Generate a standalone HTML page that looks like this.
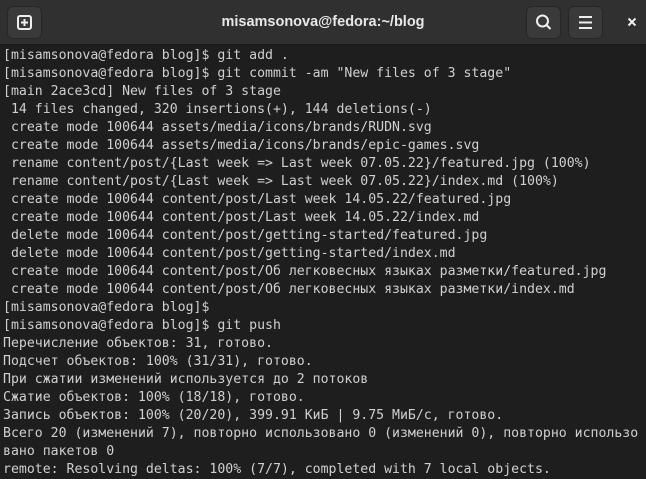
<!DOCTYPE html>
<html><head><meta charset="utf-8"><style>
html,body{margin:0;padding:0;width:646px;height:478px;overflow:hidden;background:#1e1e1e}
.hdr{position:absolute;left:0;top:0;width:646px;height:44px;background:#303030;border-bottom:1px solid #1a1a1a}
.title{position:absolute;left:0;width:646px;top:14px;text-align:center;color:#e8e8e8;font:bold 14.5px "Liberation Sans",sans-serif}
.btn{position:absolute;top:6px;width:33px;height:31px;background:#3a3a3a;border-radius:6px;border:1px solid #262626}
.term{position:absolute;left:3px;top:47px;color:#d0d0d0;font:13.2px "DejaVu Sans Mono","Liberation Mono",monospace;line-height:18px;white-space:pre}
</style></head><body>
<div class="hdr">
<div class="btn" style="left:7px"><svg width="33" height="31"><rect x="10" y="9" width="13" height="13" rx="2" fill="none" stroke="#eee" stroke-width="2"/><path d="M16.5 12v7M13 15.5h7" stroke="#eee" stroke-width="2"/></svg></div>
<div class="title">misamsonova@fedora:~/blog</div>
<div class="btn" style="left:526px"><svg width="33" height="31"><circle cx="15.5" cy="14" r="5.5" fill="none" stroke="#eee" stroke-width="2"/><path d="M19.5 18l4 4" stroke="#eee" stroke-width="2"/></svg></div>
<div class="btn" style="left:568px"><svg width="33" height="31"><path d="M10 10h13M10 15.5h13M10 21h13" stroke="#eee" stroke-width="2"/></svg></div>
<svg style="position:absolute;left:627px;top:17px" width="10" height="10"><path d="M1.5 1.5l7 7M8.5 1.5l-7 7" stroke="#eee" stroke-width="2"/></svg>
</div>
<div class="term">[misamsonova@fedora blog]$ git add .
[misamsonova@fedora blog]$ git commit -am "New files of 3 stage"
[main 2ace3cd] New files of 3 stage
 14 files changed, 320 insertions(+), 144 deletions(-)
 create mode 100644 assets/media/icons/brands/RUDN.svg
 create mode 100644 assets/media/icons/brands/epic-games.svg
 rename content/post/{Last week =&gt; Last week 07.05.22}/featured.jpg (100%)
 rename content/post/{Last week =&gt; Last week 07.05.22}/index.md (100%)
 create mode 100644 content/post/Last week 14.05.22/featured.jpg
 create mode 100644 content/post/Last week 14.05.22/index.md
 delete mode 100644 content/post/getting-started/featured.jpg
 delete mode 100644 content/post/getting-started/index.md
 create mode 100644 content/post/Об легковесных языках разметки/featured.jpg
 create mode 100644 content/post/Об легковесных языках разметки/index.md
[misamsonova@fedora blog]$
[misamsonova@fedora blog]$ git push
Перечисление объектов: 31, готово.
Подсчет объектов: 100% (31/31), готово.
При сжатии изменений используется до 2 потоков
Сжатие объектов: 100% (18/18), готово.
Запись объектов: 100% (20/20), 399.91 КиБ | 9.75 МиБ/с, готово.
Всего 20 (изменений 7), повторно использовано 0 (изменений 0), повторно использо
вано пакетов 0
remote: Resolving deltas: 100% (7/7), completed with 7 local objects.</div>
</body></html>
